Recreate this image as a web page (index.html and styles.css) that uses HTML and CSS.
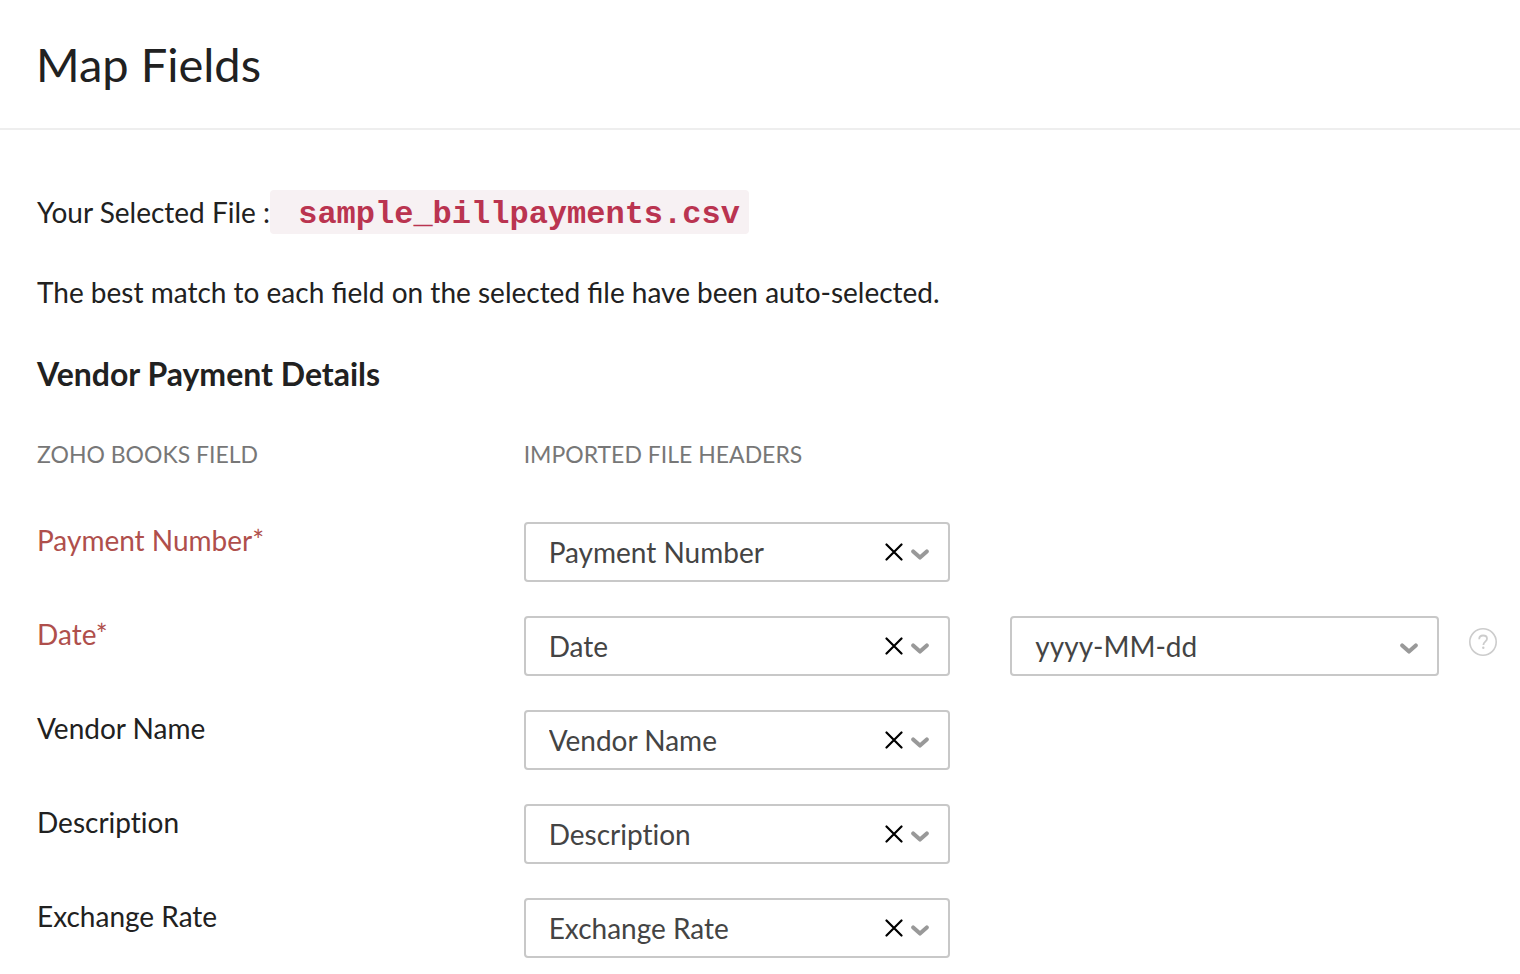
FILE: index.html
```
<!DOCTYPE html>
<html lang="en">
<head>
    <meta charset="UTF-8">
    <meta name="viewport" content="width=device-width, initial-scale=1.0">
    <title>Map Fields</title>
    <link rel="stylesheet" href="styles.css">
</head>
<body>
    <svg class="sprite" aria-hidden="true">
        <symbol id="icon-close" viewBox="0 0 18 18">
            <path d="M1.5 1.5l15 15M16.5 1.5l-15 15" fill="none" stroke="currentColor" stroke-width="2.2" stroke-linecap="round"/>
        </symbol>
        <symbol id="icon-chevron" viewBox="0 0 18 12">
            <path d="M2.2 2.4L9 8.6l6.8-6.2" fill="none" stroke="currentColor" stroke-width="4" stroke-linecap="round" stroke-linejoin="round"/>
        </symbol>
    </svg>

    <header class="page-header">
        <h1>Map Fields</h1>
    </header>

    <main class="content">
        <p class="file-line">Your Selected File :<code>&nbsp;sample_billpayments.csv</code></p>
        <p>The best match to each field on the selected file have been auto-selected.</p>

        <h2>Vendor Payment Details</h2>

        <form class="map-form">
            <div class="map-row map-head">
                <span>ZOHO BOOKS FIELD</span>
                <span>IMPORTED FILE HEADERS</span>
            </div>

            <div class="map-row">
                <label class="required" for="payment-number">Payment Number*</label>
                <div class="map-cell">
                    <div class="select-box clearable">
                        <select id="payment-number"><option>Payment Number</option></select>
                        <button type="button" class="clear-btn" aria-label="Clear Payment Number"><svg><use href="#icon-close"/></svg></button>
                        <svg class="chevron"><use href="#icon-chevron"/></svg>
                    </div>
                </div>
            </div>

            <div class="map-row">
                <label class="required" for="date">Date*</label>
                <div class="map-cell">
                    <div class="select-box clearable">
                        <select id="date"><option>Date</option></select>
                        <button type="button" class="clear-btn" aria-label="Clear Date"><svg><use href="#icon-close"/></svg></button>
                        <svg class="chevron"><use href="#icon-chevron"/></svg>
                    </div>
                </div>
                <div class="format-cell">
                    <div class="select-box">
                        <select aria-label="Date format"><option>yyyy-MM-dd</option></select>
                        <svg class="chevron"><use href="#icon-chevron"/></svg>
                    </div>
                    <button type="button" class="help-btn" aria-label="Date format help">
                        <svg viewBox="0 0 28 28" fill="none" stroke="currentColor">
                            <circle cx="14" cy="14" r="13.2" stroke-width="1.6"/>
                            <path d="M10.2 11.2c0-2.2 1.6-3.7 3.9-3.7 2.2 0 3.9 1.3 3.9 3.2 0 2.9-3.6 3-3.6 6.2" stroke-width="1.8"/>
                            <circle cx="14.3" cy="19.7" r="1.2" fill="currentColor" stroke="none"/>
                        </svg>
                    </button>
                </div>
            </div>

            <div class="map-row">
                <label for="vendor-name">Vendor Name</label>
                <div class="map-cell">
                    <div class="select-box clearable">
                        <select id="vendor-name"><option>Vendor Name</option></select>
                        <button type="button" class="clear-btn" aria-label="Clear Vendor Name"><svg><use href="#icon-close"/></svg></button>
                        <svg class="chevron"><use href="#icon-chevron"/></svg>
                    </div>
                </div>
            </div>

            <div class="map-row">
                <label for="description">Description</label>
                <div class="map-cell">
                    <div class="select-box clearable">
                        <select id="description"><option>Description</option></select>
                        <button type="button" class="clear-btn" aria-label="Clear Description"><svg><use href="#icon-close"/></svg></button>
                        <svg class="chevron"><use href="#icon-chevron"/></svg>
                    </div>
                </div>
            </div>

            <div class="map-row">
                <label for="exchange-rate">Exchange Rate</label>
                <div class="map-cell">
                    <div class="select-box clearable">
                        <select id="exchange-rate"><option>Exchange Rate</option></select>
                        <button type="button" class="clear-btn" aria-label="Clear Exchange Rate"><svg><use href="#icon-close"/></svg></button>
                        <svg class="chevron"><use href="#icon-chevron"/></svg>
                    </div>
                </div>
            </div>
        </form>
    </main>
</body>
</html>
```
FILE: styles.css
```
:root {
    --text: #212121;
    --field-text: #444;
    --muted: #777;
    --required: #af4f4c;
    --border: #c8c8c8;
}

* {
    margin: 0;
    padding: 0;
    box-sizing: border-box;
}

body {
    background: #fff;
    color: var(--text);
    font-family: Lato, sans-serif;
    font-size: 28px;
    line-height: 44px;
}

.sprite {
    display: none;
}

.page-header {
    padding: 32px 36px;
    border-bottom: 2px solid #eee;
}

.page-header h1 {
    font-size: 47px;
    font-weight: 400;
    line-height: 64px;
}

.content {
    padding: 60px 23px 16px 37px;
}

.content p {
    margin-bottom: 36px;
}

.file-line {
    display: flex;
    flex-wrap: wrap;
}

.file-line code {
    padding: 6px 9px 0;
    border-radius: 4px;
    background: #f7f1f3;
    color: #ba3450;
    font-family: "Courier New", "Liberation Mono", monospace;
    font-size: 32px;
    font-weight: 700;
    line-height: 38px;
}

h2 {
    margin-bottom: 40px;
    font-size: 32px;
    font-weight: 700;
    line-height: 48px;
}

.map-form {
    display: flex;
    flex-direction: column;
    gap: 34px;
    font-variant-ligatures: none;
}

.map-row {
    display: grid;
    grid-template-columns: repeat(3, 1fr);
    align-items: start;
}

.map-head {
    margin-bottom: 18px;
    color: var(--muted);
    font-size: 23px;
    line-height: 32px;
}

.map-row label {
    line-height: 36px;
}

.map-row .required {
    color: var(--required);
}

.map-cell {
    padding-right: 60px;
}

.format-cell {
    display: flex;
    gap: 30px;
}

.select-box {
    position: relative;
    flex: 1;
}

.select-box select {
    display: block;
    width: 100%;
    height: 60px;
    padding: 0 60px 0 23px;
    border: 2px solid var(--border);
    border-radius: 4px;
    background: #fff;
    color: var(--field-text);
    font: inherit;
    font-variant-ligatures: none;
    appearance: none;
}

.clearable select {
    padding-right: 80px;
}

.select-box select:focus {
    outline: none;
    border-color: #408dfb;
}

.clear-btn,
.help-btn {
    border: none;
    background: none;
    cursor: pointer;
}

.clear-btn {
    position: absolute;
    top: 21px;
    right: 47px;
    width: 18px;
    height: 18px;
    color: #000;
}

.clear-btn svg,
.help-btn svg {
    display: block;
    width: 100%;
    height: 100%;
}

.chevron {
    position: absolute;
    top: 27px;
    right: 21px;
    width: 18px;
    height: 12px;
    color: #999;
    pointer-events: none;
}

.help-btn {
    width: 28px;
    height: 28px;
    margin-top: 12px;
    color: #ccc;
}
```
